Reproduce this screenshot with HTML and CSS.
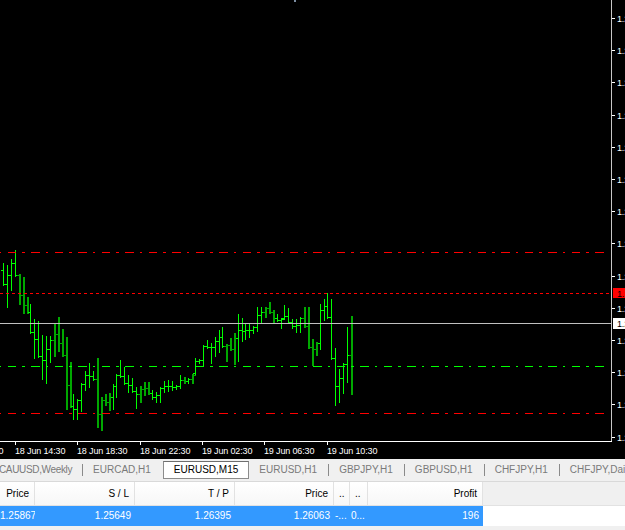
FILE: index.html
```html
<!DOCTYPE html>
<html>
<head>
<meta charset="utf-8">
<title>EURUSD,M15</title>
<link rel="stylesheet" href="styles.css">
</head>
<body>
<div class="chart">
  <svg id="chart" class="chart-svg" width="625" height="459" viewBox="0 0 625 459" shape-rendering="crispEdges">
    <rect x="0" y="0" width="625" height="459" fill="#000"/>
    <rect x="294" y="0" width="2" height="2" fill="#7d8ea3"/>
    <g id="bars"></g>
    <!-- levels -->
    <line x1="0" y1="252.5" x2="610" y2="252.5" stroke="#ff0000" stroke-dasharray="8.5 6 2.5 6.5" stroke-dashoffset="16"/>
    <line x1="0" y1="293.5" x2="610" y2="293.5" stroke="#ff0000" stroke-dasharray="3 3"/>
    <line x1="0" y1="323.5" x2="611" y2="323.5" stroke="#c0c0c0"/>
    <line x1="0" y1="366.5" x2="610" y2="366.5" stroke="#00ff00" stroke-dasharray="8.5 6 2.5 6.5" stroke-dashoffset="16"/>
    <line x1="0" y1="413.5" x2="610" y2="413.5" stroke="#ff0000" stroke-dasharray="8.5 6 2.5 6.5" stroke-dashoffset="16"/>
    <!-- axes -->
    <line x1="611.5" y1="0" x2="611.5" y2="442" stroke="#c8c8c8"/>
    <line x1="0" y1="441.5" x2="612" y2="441.5" stroke="#ffffff"/>
    <g id="price-ticks" stroke="#ffffff"></g>
    <g id="price-labels" class="axis-text"></g>
    <rect x="613" y="288" width="12" height="10" fill="#ff0000"/>
    <text x="617" y="296.5" class="axis-text dark">1.26205</text>
    <rect x="613" y="318" width="12" height="11" fill="#ffffff"/>
    <text x="617" y="327" class="axis-text dark">1.26063</text>
    <g id="time-ticks" stroke="#ffffff"></g>
    <g id="time-labels" class="axis-text"></g>
  </svg>
</div>
<div class="tabs">
  <div class="tab first sep">CAUUSD,Weekly</div>
  <div class="tab">EURCAD,H1</div>
  <div class="tab active">EURUSD,M15</div>
  <div class="tab sep">EURUSD,H1</div>
  <div class="tab sep">GBPJPY,H1</div>
  <div class="tab sep">GBPUSD,H1</div>
  <div class="tab sep">CHFJPY,H1</div>
  <div class="tab">CHFJPY,Daily</div>
</div>
<div class="terminal">
  <div class="grid thead">
    <div class="cell">Price</div>
    <div class="cell">S / L</div>
    <div class="cell">T / P</div>
    <div class="cell">Price</div>
    <div class="cell left">..</div>
    <div class="cell left">..</div>
    <div class="cell">Profit</div>
    <div class="cell rest"></div>
  </div>
  <div class="grid trow">
    <div class="cell">1.25867</div>
    <div class="cell">1.25649</div>
    <div class="cell">1.26395</div>
    <div class="cell">1.26063</div>
    <div class="cell left">-...</div>
    <div class="cell left">0...</div>
    <div class="cell">196</div>
    <div class="cell rest"></div>
  </div>
</div>
<script src="script.js"></script>
</body>
</html>
```

FILE: styles.css
```css
* { box-sizing: border-box; }
html, body {
  margin: 0;
  padding: 0;
}
body {
  width: 625px;
  height: 530px;
  overflow: hidden;
  background: #f0f0f0;
  font-family: "Liberation Sans", Arial, sans-serif;
}
.chart {
  height: 459px;
  background: #000;
}
.chart-svg {
  display: block;
}
.axis-text {
  font-family: "Liberation Sans", Arial, sans-serif;
  font-size: 9px;
  fill: #ffffff;
  letter-spacing: -0.15px;
}
.axis-text.dark {
  fill: #000000;
}
.tabs {
  height: 23px;
  display: flex;
  align-items: center;
  background: #f0f0f0;
  border-bottom: 1px solid #d9d9d9;
  font-size: 10px;
  color: #7a7a7a;
  white-space: nowrap;
  overflow: hidden;
}
.tab {
  position: relative;
  padding: 0 12px 0 10px;
  line-height: 18px;
  height: 18px;
  flex: none;
}
.tab.first {
  padding-left: 0;
  padding-right: 11px;
  margin-left: -1px;
  letter-spacing: -0.35px;
}
.tab.sep::after {
  content: "";
  position: absolute;
  right: 0;
  top: 3px;
  width: 1px;
  height: 12px;
  background: #8a8a8a;
}
.tab.active {
  background: #ffffff;
  color: #000000;
  border: 1px solid #8c8c8c;
  border-top-color: #6e6e6e;
  padding: 0 10px 0 10px;
  line-height: 16px;
}
.terminal {
  font-size: 10px;
}
.grid {
  display: grid;
  grid-template-columns: 35px 100px 100px 99px 16px 18px 115px 1fr;
}
.thead {
  height: 24px;
  color: #000;
}
.thead .cell {
  background: linear-gradient(#ffffff, #f7f7f7);
  border-right: 1px solid #e2e2e2;
  border-bottom: 1px solid #e2e2e2;
  line-height: 23px;
}
.thead .cell.rest {
  background: #f0f0f0;
  border-right: none;
}
.cell {
  text-align: right;
  padding-right: 5px;
  white-space: nowrap;
  overflow: hidden;
}
.cell.left {
  text-align: left;
  padding-left: 5px;
  padding-right: 0;
}
.trow {
  height: 20px;
}
.trow .cell {
  background: #3399ff;
  color: #ffffff;
  line-height: 20px;
  padding-right: 4px;
}
.trow .cell.left {
  padding-right: 0;
  padding-left: 1px;
}
.trow .cell.rest {
  background: #ffffff;
}
```

FILE: script.js
```js
(function () {
  var NS = "http://www.w3.org/2000/svg";
  function el(name, attrs, parent) {
    var e = document.createElementNS(NS, name);
    for (var k in attrs) e.setAttribute(k, attrs[k]);
    parent.appendChild(e);
    return e;
  }
  // x, high(y), low(y), dark
  var bars = [
    [3,263,285,0],[7,265,307,0],[11,259,290,0],[15,250,276,0],[19,274,304,1],
    [23,277,313,1],[27,297,313,1],[30,304,333,0],[34,319,358,0],[38,321,357,0],
    [42,335,379,0],[46,336,383,0],[50,336,362,0],[54,323,356,1],[58,317,351,1],
    [62,329,356,1],[66,337,409,1],[70,362,407,1],[73,394,419,0],[77,399,419,0],
    [81,383,411,0],[85,371,390,0],[89,363,387,0],[93,371,380,0],[97,358,427,1],
    [101,397,430,1],[105,394,405,1],[109,393,410,1],[113,384,409,0],[116,374,397,0],
    [120,360,377,0],[124,367,384,0],[128,375,392,0],[132,378,392,0],[136,387,408,0],
    [140,386,402,1],[144,382,395,1],[148,382,394,1],[152,390,399,0],[156,392,402,0],
    [160,387,402,0],[164,381,392,0],[168,380,391,0],[172,381,390,0],[176,385,389,0],
    [180,375,388,0],[184,377,383,1],[188,378,383,0],[192,374,383,1],[195,358,374,0],
    [199,359,363,0],[203,345,365,0],[207,340,348,0],[211,343,363,0],[215,337,356,0],
    [219,330,352,0],[222,327,347,0],[226,344,361,1],[230,338,350,1],[234,333,364,1],
    [238,314,361,0],[242,318,341,0],[245,323,339,0],[249,323,337,0],[253,326,333,0],
    [257,307,331,0],[261,307,323,0],[265,307,317,1],[269,302,313,1],[273,310,322,1],
    [277,314,321,0],[281,318,328,0],[284,305,319,0],[288,308,323,0],[292,319,328,0],
    [296,319,332,0],[300,317,332,0],[304,307,327,1],[308,307,348,1],[312,339,365,1],
    [316,342,355,1],[320,304,349,0],[324,299,320,0],[327,293,318,0],[331,299,359,0],
    [335,348,405,0],[339,369,402,0],[343,363,393,0],[347,327,382,0],[351,316,394,1]
  ];
  function clamp(v, a, b) { return Math.max(a, Math.min(b, v)); }
  var g = document.getElementById("bars");
  var prevClose = 270;
  for (var i = 0; i < bars.length; i++) {
    var b = bars[i], x = b[0], hi = b[1], lo = b[2], dark = b[3];
    var open = Math.round(clamp(prevClose, hi + 1, lo - 1));
    var close;
    if (i === bars.length - 1) close = 323;
    else {
      var n = bars[i + 1];
      close = Math.round(clamp((n[1] + n[2]) / 2, hi + 1, lo - 1));
    }
    prevClose = close;
    var color = dark ? "#00a800" : "#00ff00";
    var w = dark ? 2 : 1;
    el("rect", { x: x, y: hi, width: w, height: lo - hi + 1, fill: color }, g);
    el("rect", { x: x - 2, y: open, width: 2, height: 1, fill: color }, g);
    el("rect", { x: x + w, y: close, width: 2, height: 1, fill: color }, g);
  }
  // price axis
  var pt = document.getElementById("price-ticks");
  var pl = document.getElementById("price-labels");
  for (var k = 0; k < 14; k++) {
    var y = Math.round(18 + 32.2 * k);
    el("line", { x1: 612, y1: y + 0.5, x2: 615, y2: y + 0.5 }, pt);
    var t = el("text", { x: 617, y: y + 4 }, pl);
    t.textContent = (1.2748 - 0.0015 * k).toFixed(4);
  }
  // time axis
  var tt = document.getElementById("time-ticks");
  var tl = document.getElementById("time-labels");
  var ticks = [[-47, "18 Jun 10:30"], [15, "18 Jun 14:30"], [77, "18 Jun 18:30"], [140, "18 Jun 22:30"],
               [202, "19 Jun 02:30"], [264, "19 Jun 06:30"], [327, "19 Jun 10:30"]];
  ticks.forEach(function (tk) {
    el("line", { x1: tk[0] + 0.5, y1: 442, x2: tk[0] + 0.5, y2: 445 }, tt);
    var t = el("text", { x: tk[0], y: 454 }, tl);
    t.textContent = tk[1];
  });
})();
```
